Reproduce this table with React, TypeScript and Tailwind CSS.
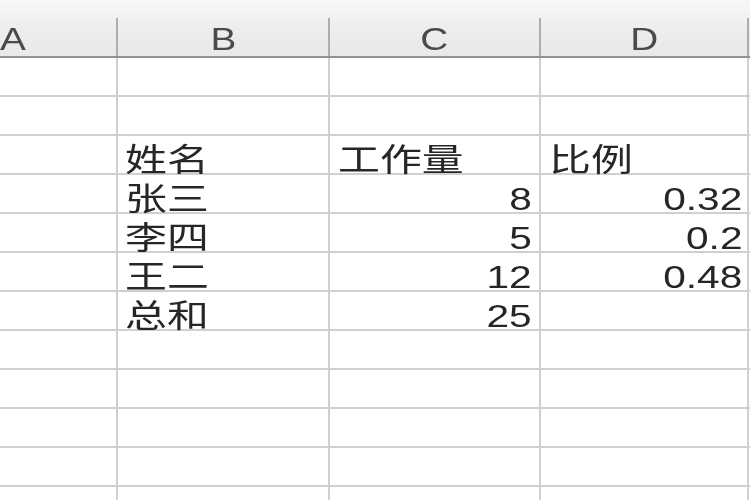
import React from "react";

const rows: { b?: string; c?: string; cAlign?: "l" | "r"; d?: string; dAlign?: "l" | "r" }[] = [
  {},
  {},
  { b: "姓名", c: "工作量", cAlign: "l", d: "比例", dAlign: "l" },
  { b: "张三", c: "8", cAlign: "r", d: "0.32", dAlign: "r" },
  { b: "李四", c: "5", cAlign: "r", d: "0.2", dAlign: "r" },
  { b: "王二", c: "12", cAlign: "r", d: "0.48", dAlign: "r" },
  { b: "总和", c: "25", cAlign: "r" },
  {},
  {},
  {},
  {},
  {},
];

const font = { fontFamily: '"Liberation Sans", "Noto Sans CJK SC", sans-serif' };

function Txt({ t, align }: { t?: string; align?: "l" | "r" }) {
  if (!t) return null;
  const cjk = /[\u4e00-\u9fff]/.test(t);
  return (
    <span
      className={`inline-block text-[32px] leading-[26px] text-[#262626] ${cjk ? "scale-x-[1.31]" : "scale-x-[1.27]"} ${
        align === "r" ? "origin-right" : "origin-left"
      }`}
    >
      {t}
    </span>
  );
}

function Cell({
  children,
  w,
  justify,
  pad,
}: {
  children?: React.ReactNode;
  w: string;
  justify: "l" | "r";
  pad: string;
}) {
  return (
    <div
      className={`${w} h-[39px] shrink-0 flex items-end border-r-2 border-b-2 border-[#d0d0d0] ${
        justify === "r" ? "justify-end" : "justify-start"
      } ${pad}`}
    >
      {children}
    </div>
  );
}

function HeadCell({ label, w, left }: { label: string; w: string; left?: boolean }) {
  return (
    <div className={`${w} h-[56px] shrink-0 flex flex-row`}>
      <div className={`flex-1 flex items-end pb-[3px] ${left ? "justify-start" : "justify-center"}`}>
        <span
          className={`inline-block text-[31px] leading-[26px] text-[#4a4a4a] scale-x-[1.25] ${
            left ? "origin-left" : "origin-center"
          }`}
        >
          {label}
        </span>
      </div>
      <div className="w-[2px] h-[38px] self-end bg-[#adadad]" />
    </div>
  );
}

export default function App() {
  return (
    <div className="w-[750px] h-[500px] overflow-hidden bg-white blur-[0.6px]" style={font}>
      <div className="flex flex-row h-[58px] bg-gradient-to-b from-[#f8f8f8] via-[#ededed] to-[#e9e9e9] border-b-2 border-[#929292] w-[760px]">
        <HeadCell label="A" w="w-[118px]" left />
        <HeadCell label="B" w="w-[212px]" />
        <HeadCell label="C" w="w-[211px]" />
        <HeadCell label="D" w="w-[208px]" />
        <div className="flex-1" />
      </div>
      {rows.map((r, i) => (
        <div key={i} className="flex flex-row w-[760px]">
          <Cell w="w-[118px]" justify="l" pad="" />
          <Cell w="w-[212px]" justify="l" pad="pl-[7px]">
            <Txt t={r.b} align="l" />
          </Cell>
          <Cell w="w-[211px]" justify={r.cAlign === "r" ? "r" : "l"} pad={r.cAlign === "r" ? "pr-[7px]" : "pl-[8px]"}>
            <Txt t={r.c} align={r.cAlign} />
          </Cell>
          <Cell w="w-[208px]" justify={r.dAlign === "r" ? "r" : "l"} pad={r.dAlign === "r" ? "pr-[5px]" : "pl-[8px]"}>
            <Txt t={r.d} align={r.dAlign} />
          </Cell>
          <Cell w="w-[20px]" justify="l" pad="" />
        </div>
      ))}
    </div>
  );
}
